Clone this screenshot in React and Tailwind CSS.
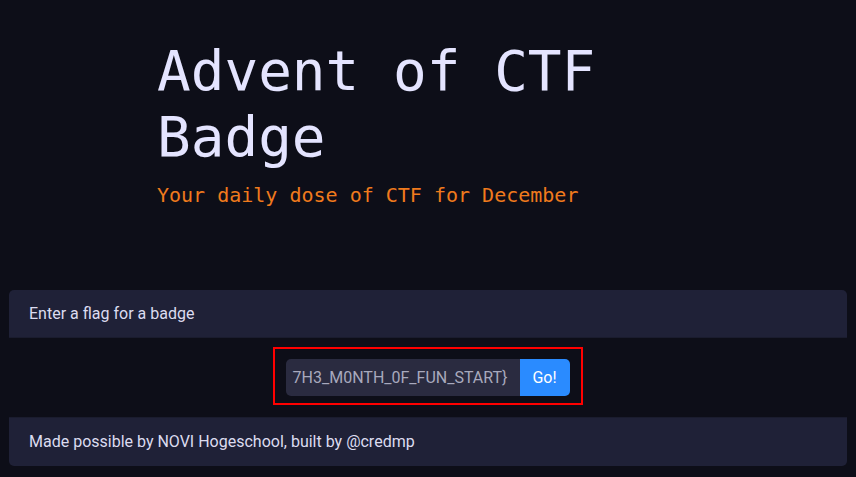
export default function App() {
  return (
    <div className="min-h-[477px] w-full bg-[#0d0e18] font-['Roboto',sans-serif] text-[#dcdcf0]">
      {/* Hero */}
      <div className="pl-[157px] pt-[38px] pb-[82px]">
        <h1 className="font-['DejaVu_Sans_Mono',monospace] text-[56px] leading-[66px] text-[#e4e4ff] w-[460px]">
          Advent of CTF Badge
        </h1>
        <p className="mt-[12px] font-['DejaVu_Sans_Mono',monospace] text-[20px] leading-[26px] text-[#f07a1d]">
          Your daily dose of CTF for December
        </p>
      </div>

      {/* Card */}
      <div className="mx-[9px]">
        <div className="h-[48px] rounded-t-[5px] bg-[#1f2137] border-b border-[#1a1c2e] px-[20px] flex items-center text-[16px]">
          Enter a flag for a badge
        </div>
        <div className="flex justify-center pt-[9px] pb-[12px]">
          <div className="border-2 border-[#ff0000] pl-[11px] pr-[11px] pt-[10px] pb-[7px] -ml-[1px]">
            <div className="flex h-[37px]">
              <div className="w-[234px] rounded-l-[5px] bg-[#2a2b40] overflow-hidden flex justify-end items-center pr-[12px] whitespace-nowrap text-[16px] text-[#a8a9bd]">
                7H3_M0NTH_0F_FUN_START{"}"}
              </div>
              <button className="w-[50px] rounded-r-[5px] bg-[#2a8bff] text-[16px] text-white">
                Go!
              </button>
            </div>
          </div>
        </div>
        <div className="h-[49px] rounded-b-[5px] bg-[#1f2137] border-t border-[#1a1c2e] px-[20px] flex items-center text-[16px]">
          Made possible by NOVI Hogeschool, built by @credmp
        </div>
      </div>
    </div>
  )
}
